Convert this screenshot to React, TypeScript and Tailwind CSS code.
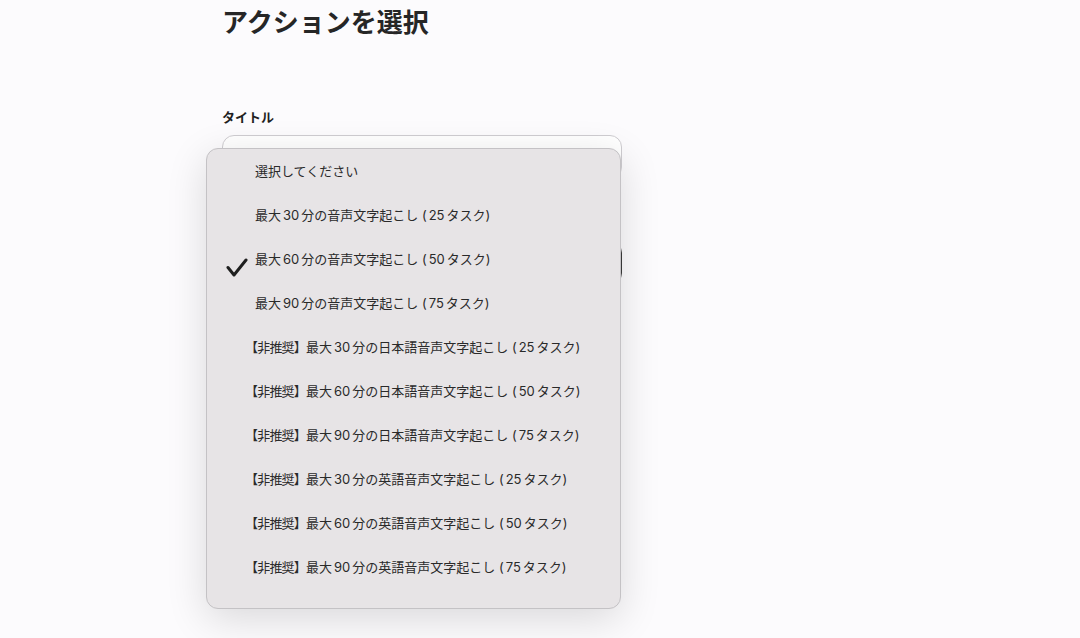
import React from "react";

const options = [
  "選択してください",
  "最大30分の音声文字起こし (25タスク)",
  "最大60分の音声文字起こし (50タスク)",
  "最大90分の音声文字起こし (75タスク)",
  "【非推奨】最大30分の日本語音声文字起こし (25タスク)",
  "【非推奨】最大60分の日本語音声文字起こし (50タスク)",
  "【非推奨】最大90分の日本語音声文字起こし (75タスク)",
  "【非推奨】最大30分の英語音声文字起こし (25タスク)",
  "【非推奨】最大60分の英語音声文字起こし (50タスク)",
  "【非推奨】最大90分の英語音声文字起こし (75タスク)",
];

const selected = 2;

// give latin runs a little room next to kana, like macOS does
const Spaced: React.FC<{ text: string }> = ({ text }) => {
  const parts = text.split(/(\d+|【非推奨】)/);
  return (
    <>
      {parts.map((p, i) =>
        /^\d+$/.test(p) ? (
          <span key={i} className="mx-[2px]">
            {p}
          </span>
        ) : p.startsWith("【") ? (
          <span key={i} className="tracking-[-0.8px]">
            {p}
          </span>
        ) : (
          <span key={i}>{p}</span>
        )
      )}
    </>
  );
};

const Check = () => (
  <svg width="22" height="20" viewBox="0 0 22 20" fill="none">
    <path d="M2 9.5 L8 17 L20 2" stroke="#1f1f1f" strokeWidth="3" strokeLinecap="round" strokeLinejoin="round" />
  </svg>
);

export default function App() {
  return (
    <div
      className="min-h-[638px] w-full bg-[#fcfbfd] text-[#222] relative overflow-hidden"
      style={{ fontFamily: '"Inter", "Noto Sans CJK JP", sans-serif' }}
    >
      <div className="ml-[222px] w-[400px] pt-[4px]">
        <h1 className="text-[26px] font-bold leading-[38px] text-[#262626]">アクションを選択</h1>

        <div className="mt-[66px]">
          <label className="block text-[13px] font-bold leading-[18px] text-[#1f1f1f]">タイトル</label>
          <div className="mt-[9px] h-[44px] rounded-[12px] border border-[#cfcdd1] bg-white" />
        </div>

        <div className="mt-[62px] h-[44px] rounded-[12px] border-[1.5px] border-[#3a3a3a] bg-white" />
      </div>

      {/* native select popup */}
      <div className="absolute left-[206px] top-[148px] w-[415px] h-[461px] rounded-[12px] border border-[#c4c2c5] bg-[#e7e4e6] shadow-[0_10px_40px_rgba(0,0,0,0.14)] pb-[19px]">
        {options.map((o, i) => {
          const dep = o.startsWith("【");
          return (
            <div key={o} className="relative h-[44px] flex items-center">
              {i === selected && (
                <div className="absolute left-[19px] top-[21px]">
                  <Check />
                </div>
              )}
              <span
                className={`text-[13px] leading-[18px] text-[#2a2a2a] whitespace-nowrap ${
                  dep ? "ml-[38px]" : "ml-[48px]"
                }`}
              >
                <Spaced text={o} />
              </span>
            </div>
          );
        })}
      </div>
    </div>
  );
}
